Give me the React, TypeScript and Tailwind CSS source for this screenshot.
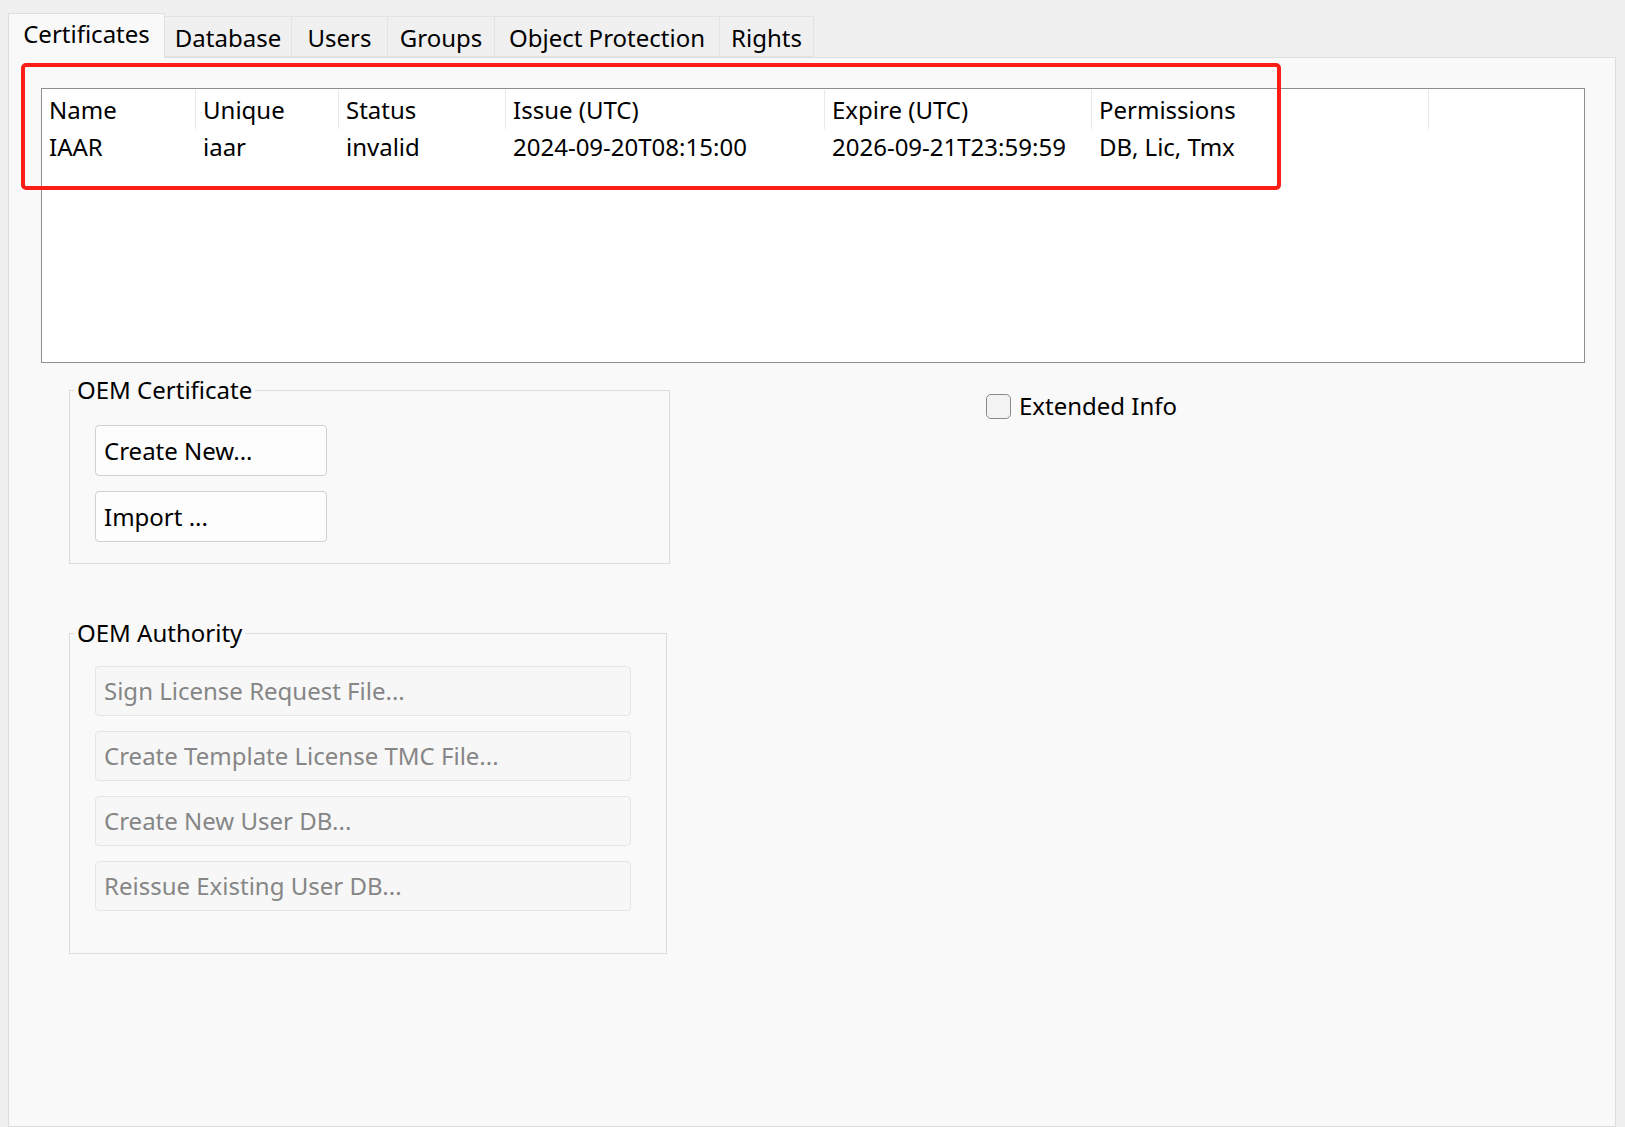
import React from 'react';

const tabs = [
  { label: 'Certificates', w: 'w-[157px]', active: true },
  { label: 'Database', w: 'w-[127px]' },
  { label: 'Users', w: 'w-[96px]' },
  { label: 'Groups', w: 'w-[107px]' },
  { label: 'Object Protection', w: 'w-[225px]' },
  { label: 'Rights', w: 'w-[94px]' },
];

// column widths measured from the reference list view
const columns = [
  { label: 'Name', w: 'w-[154px]', value: 'IAAR' },
  { label: 'Unique', w: 'w-[143px]', value: 'iaar' },
  { label: 'Status', w: 'w-[167px]', value: 'invalid' },
  { label: 'Issue (UTC)', w: 'w-[319px]', value: '2024-09-20T08:15:00' },
  { label: 'Expire (UTC)', w: 'w-[267px]', value: '2026-09-21T23:59:59' },
  { label: 'Permissions', w: 'w-[337px]', value: 'DB, Lic, Tmx' },
];

function GroupBox({ title, className, children }: { title: string; className: string; children: React.ReactNode }) {
  return (
    <div className={`border border-[#dcdcdc] ${className}`}>
      <div className="-mt-[17px] ml-[4px] w-fit bg-[#f9f9f9] px-[3px] leading-[32px]">{title}</div>
      {children}
    </div>
  );
}

export default function App() {
  return (
    <div className="relative flex h-[1127px] w-full flex-col bg-[#f0f0f0] pl-[8px] pr-[9px] pt-[13px] font-['Noto_Sans',sans-serif] text-[24px] text-black">
      {/* tab strip */}
      <div className="flex h-[44px] items-end">
        {tabs.map((t) =>
          t.active ? (
            <div
              key={t.label}
              className={`${t.w} relative z-10 -mb-px flex h-[45px] items-start justify-center border border-b-0 border-[#dedede] bg-[#f9f9f9] pt-[2px] leading-[36px]`}
            >
              {t.label}
            </div>
          ) : (
            <div
              key={t.label}
              className={`${t.w} flex h-[41px] items-start justify-center border border-l-0 border-[#e3e3e3] bg-[#f0f0f0] pt-[3px] leading-[36px]`}
            >
              {t.label}
            </div>
          )
        )}
      </div>

      {/* tab pane */}
      <div className="flex-1 border border-[#dedede] bg-[#f9f9f9] pt-[30px]">
        <div className="ml-[32px] h-[275px] w-[1544px] border border-[#8e8e8e] bg-white">
          <div className="flex h-[40px] pt-px">
            {columns.map((c) => (
              <div key={c.label} className={`${c.w} border-r border-[#e8e8e8] pl-[7px] leading-[40px]`}>
                {c.label}
              </div>
            ))}
            <div className="w-[1px]" />
          </div>
          <div className="flex h-[37px]">
            {columns.map((c) => (
              <div key={c.label} className={`${c.w} pl-[7px] leading-[36px]`}>
                {c.value}
              </div>
            ))}
          </div>
        </div>

        <div className="mt-[27px] flex">
          <div className="ml-[60px] flex w-[601px] flex-col">
            <GroupBox title="OEM Certificate" className="h-[174px] w-[601px]">
              <div className="mt-[19px] flex flex-col gap-[15px] pl-[25px]">
                <button className="h-[51px] w-[232px] rounded-[4px] border border-[#d0d0d0] bg-[#fdfdfd] pl-[8px] text-left">
                  Create New...
                </button>
                <button className="h-[51px] w-[232px] rounded-[4px] border border-[#d0d0d0] bg-[#fdfdfd] pl-[8px] text-left">
                  Import ...
                </button>
              </div>
            </GroupBox>

            <GroupBox title="OEM Authority" className="mt-[69px] h-[321px] w-[598px]">
              <div className="mt-[17px] flex flex-col gap-[15px] pl-[25px]">
                {['Sign License Request File...', 'Create Template License TMC File...', 'Create New User DB...', 'Reissue Existing User DB...'].map(
                  (label) => (
                    <button
                      key={label}
                      disabled
                      className="h-[50px] w-[536px] rounded-[4px] border border-[#e5e5e5] bg-[#f7f7f7] pl-[8px] text-left text-[#868686]"
                    >
                      {label}
                    </button>
                  )
                )}
              </div>
            </GroupBox>
          </div>

          <label className="ml-[316px] mt-[3px] flex h-[26px] items-center gap-[8px] self-start">
            <span className="h-[25px] w-[25px] rounded-[5px] border border-[#8a8a8a] bg-[#f3f3f3]" />
            <span className="leading-[26px]">Extended Info</span>
          </label>
        </div>
      </div>

      {/* red annotation frame */}
      <div className="pointer-events-none absolute left-[21px] top-[63px] h-[127px] w-[1260px] rounded-[5px] border-[4px] border-[#fb1e16]" />
    </div>
  );
}
